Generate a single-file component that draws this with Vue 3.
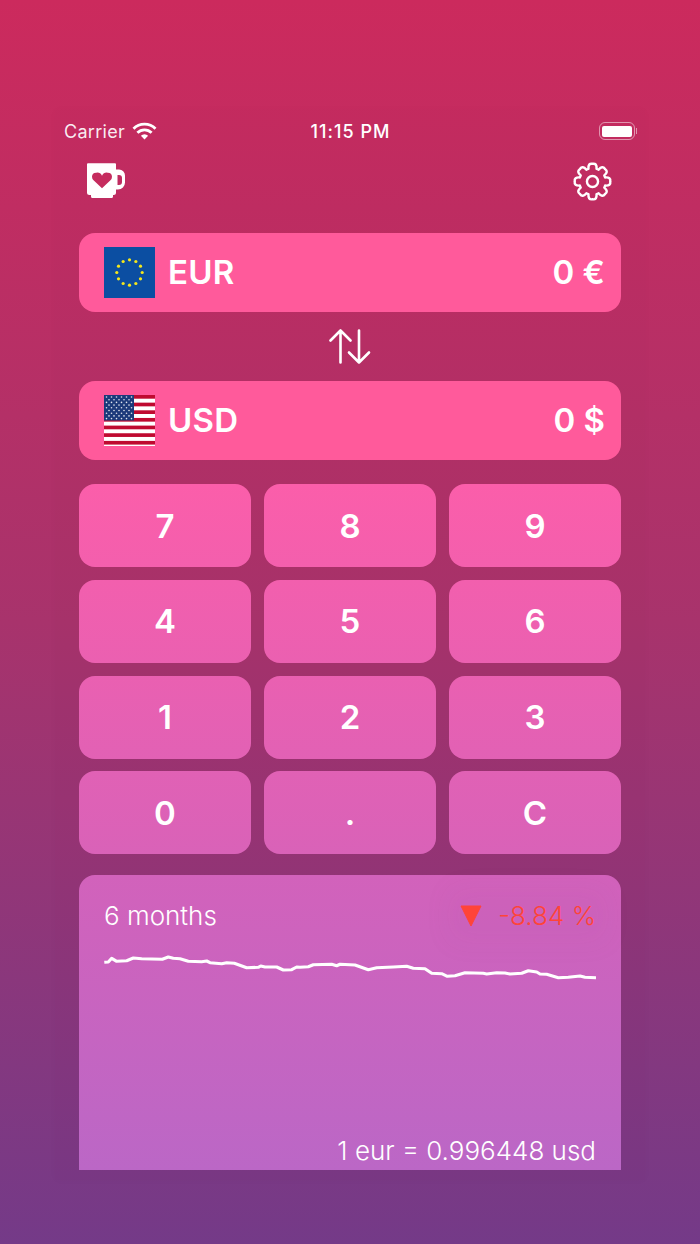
<template>
  <div class="page">
    <div class="screen">
      <div class="status">
        <div class="status-left">
          <span>Carrier</span>
          <svg width="25" height="18" viewBox="0 0 25 18" fill="none" stroke="#fff" stroke-width="2.800">
            <path d="M1.500 6.800a15.500 15.500 0 0 1 22 0" />
            <path d="M5.400 10.800a10 10 0 0 1 14.200 0" />
            <path d="M12.500 17.500l-3.600-3.700a5 5 0 0 1 7.200 0z" fill="#fff" stroke="none" />
          </svg>
        </div>
        <span class="clock">11:15 PM</span>
        <div class="battery">
          <div class="battery-body"><div class="battery-fill"></div></div>
          <div class="battery-cap"></div>
        </div>
      </div>

      <div class="toolbar">
        <svg width="40" height="38" viewBox="0 0 40 38">
          <path fill="#fff" fill-rule="evenodd" d="M2 1.200h27a1 1 0 0 1 1 1V7.500h3a6 6 0 0 1 6 6v7a7 7 0 0 1-7 7h-2v3a2.500 2.500 0 0 1-2.500 2.500H27v1.500a1.500 1.500 0 0 1-1.500 1.500H6.500A1.500 1.500 0 0 1 5 34.500V33H3.500A2.500 2.500 0 0 1 1 30.500V2.200a1 1 0 0 1 1-1zM31.500 13v10h1.500a3 3 0 0 0 3-3v-4a3 3 0 0 0-3-3z" />
          <path fill="#c52c5e" d="M16 26.300 7.800 18.600a5 5 0 0 1-1.800-3.900 4.200 4.200 0 0 1 4.300-4 5.400 5.400 0 0 1 5.700 3 5.400 5.400 0 0 1 5.700-3 4.200 4.200 0 0 1 4.300 4 5 5 0 0 1-1.800 3.900z" />
        </svg>
        <svg width="39" height="39" viewBox="-20 -20 40 40" fill="none" stroke="#fff" stroke-width="2.500" stroke-linejoin="round">
          <circle r="5.700" />
          <path :d="gearPath" />
        </svg>
      </div>

      <div class="currency">
        <svg class="flag" width="51" height="51" viewBox="0 0 51 51">
          <rect width="51" height="51" fill="#0b4ea2" />
          <circle v-for="s in euStars" :key="s.x" :cx="s.x" :cy="s.y" r="1.600" fill="#f5e71c" />
        </svg>
        <span class="code">EUR</span>
        <span class="amount">0 €</span>
      </div>

      <div class="swap">
        <svg width="42" height="36" viewBox="0 0 42 36" fill="none" stroke="#fff" stroke-width="2.600" stroke-linecap="round" stroke-linejoin="round">
          <path d="M11.500 33.500V1.500M1.500 11.500l10-10 10 10" />
          <path d="M30 1.500v32M20 23.500l10 10 10-10" />
        </svg>
      </div>

      <div class="currency">
        <svg class="flag" width="51" height="51" viewBox="0 0 51 51">
          <rect width="51" height="51" fill="#fff" />
          <rect v-for="y in usStripes" :key="y" x="0" :y="y" width="51" height="3.700" fill="#bf0a30" />
          <rect width="30" height="25.500" fill="#1c3a7a" />
          <circle v-for="s in usStars" :key="s.k" :cx="s.x" :cy="s.y" r="0.800" fill="#dfe3ee" />
        </svg>
        <span class="code">USD</span>
        <span class="amount">0 $</span>
      </div>

      <div class="keypad">
        <button v-for="k in keys" :key="k" class="key">{{ k }}</button>
      </div>

      <div class="chart">
        <div class="chart-head">
          <span>6 months</span>
          <div class="change">
            <svg width="22" height="22" viewBox="0 0 22 22">
              <path d="M1 1h20L11 21z" fill="#ff4438" stroke="#ff4438" stroke-linejoin="round" />
            </svg>
            <span>-8.84 %</span>
          </div>
        </div>
        <svg class="line" width="492" height="40" viewBox="104 950 492 40" fill="none" stroke="#fff" stroke-width="3.100" stroke-linejoin="round">
          <path :d="linePath" />
        </svg>
        <div class="rate">1 eur = 0.996448 usd</div>
      </div>
    </div>
  </div>
</template>

<script setup>
const keys = ['7', '8', '9', '4', '5', '6', '1', '2', '3', '0', '.', 'C'];

const euStars = Array.from({ length: 12 }, (_, i) => ({
  x: 25.5 + 12.7 * Math.sin((i * Math.PI) / 6),
  y: 25.5 - 12.7 * Math.cos((i * Math.PI) / 6),
}));

const usStripes = [0, 7.65, 15.3, 22.95, 30.6, 38.25, 45.9];

const usStars = [];
for (let r = 0; r < 9; r++) {
  const n = r % 2 ? 5 : 6;
  for (let c = 0; c < n; c++) {
    usStars.push({ k: r + '-' + c, x: (r % 2 ? 5 : 2.5) + c * 5, y: 2 + r * 2.700 });
  }
}

// eight rounded teeth, first one pointing up
const polar = (r, a) => (r * Math.sin(a)).toFixed(2) + ' ' + (-r * Math.cos(a)).toFixed(2);
let gear = 'M' + polar(13.6, -0.31);
for (let i = 0; i < 8; i++) {
  const a = (i * Math.PI) / 4;
  gear += 'Q' + polar(19.6, a - 0.24) + ' ' + polar(18.2, a);
  gear += 'Q' + polar(19.6, a + 0.24) + ' ' + polar(13.6, a + 0.31);
  gear += 'A13.6 13.6 0 0 1 ' + polar(13.6, a + Math.PI / 4 - 0.31);
}
const gearPath = gear + 'Z';

// traced from the six month rate
const points = [
  [104.3, 962.3], [108.3, 962], [111.7, 958.3], [116.7, 961.3], [126.7, 960.7], [133.3, 958],
  [141.7, 958.7], [162.3, 959.3], [168.3, 957], [173.3, 958.3], [180, 958.7], [188.3, 961.3],
  [201.7, 961.7], [206.7, 961], [210, 962.7], [221.7, 963.7], [226.7, 962.7], [234.3, 963.3],
  [246.7, 967.7], [258.3, 967.3], [260.7, 966], [265, 967], [276.7, 967], [283.3, 970],
  [291.7, 969.7], [296.7, 967], [300, 967.3], [308.3, 966.7], [313.3, 964.7], [331.7, 964.3],
  [336.7, 965.7], [340, 964.3], [355, 965], [368.3, 969.7], [376.7, 967.7], [393.3, 967],
  [406.7, 966.3], [413.3, 968.3], [425, 968.7], [431.7, 973.3], [441.7, 973.7], [447.3, 976.3],
  [455, 975.7], [465, 972.7], [483.3, 973.3], [486.7, 974], [496.7, 972.7], [505, 973],
  [510, 974], [521.7, 973.3], [528.3, 970.7], [536.7, 972], [540, 974], [546.7, 974.3],
  [558.3, 977.7], [568.3, 977.3], [580, 976], [585, 977.3], [596, 977.7],
];
const linePath = 'M' + points.map((p) => p.join(' ')).join('L');
</script>

<style>
html, body { margin: 0; }
</style>

<style scoped>
.page {
  height: 1244px; width: 700px; overflow: hidden; box-sizing: border-box;
  padding-top: 110px;
  background: linear-gradient(180deg, #cc2a5d 0%, #a8336c 50%, #743a88 100%);
  font-family: Inter, "Liberation Sans", sans-serif;
  color: #fff;
}
.screen {
  box-sizing: border-box; height: 1070px; margin: 0 55px; padding: 10px 24px 0;
  background: rgba(80, 20, 70, .02);
  box-shadow: 0 0 10px rgba(80, 20, 70, .02);
}

.status {
  display: grid; grid-template-columns: 1fr auto 1fr; align-items: center;
  height: 22px; margin: 0 -16px; padding-left: 1px;
  font-size: 18px;
}
.status-left { display: flex; align-items: center; gap: 7px; color: rgba(255,255,255,.92); letter-spacing: .3px; }
.clock { font-weight: 500; letter-spacing: 1px; }
.battery { display: flex; align-items: center; justify-content: flex-end; gap: 0; }
.battery-body {
  width: 36px; height: 18px; box-sizing: border-box; padding: 2.500px 2px;
  border: 1px solid rgba(255,255,255,.5); border-radius: 6px;
}
.battery-fill { height: 100%; background: #fff; border-radius: 2px; }
.battery-cap { width: 1px; height: 6px; margin-left: 1px; background: rgba(255,255,255,.5); }

.toolbar {
  display: flex; justify-content: space-between; align-items: center;
  height: 40px; margin: 19px 9px 32px 7px;
}

.currency {
  display: flex; align-items: center; box-sizing: border-box;
  height: 79px; padding: 0 16px 0 25px;
  background: #ff5a9b; border-radius: 16px;
  font-size: 33px; font-weight: 600;
}
.flag { flex: none; }
.code { margin: 0 0 2px 13px; letter-spacing: .3px; }
.amount { margin: 0 0 2px auto; }

.swap { height: 69px; display: flex; align-items: center; justify-content: center; }

.keypad {
  display: grid; grid-template-columns: repeat(3, 1fr);
  grid-auto-rows: 83px; gap: 12.800px 13px;
  margin-top: 24px;
}
.key {
  border: 0; padding: 0; border-radius: 16px;
  background: linear-gradient(180deg, #fb5eaa 484px, #d962b8 855px) fixed;
  color: #fff; font: 600 33px Inter, "Liberation Sans", sans-serif;
}

.chart {
  display: flex; flex-direction: column; box-sizing: border-box;
  height: 295px; margin-top: 20.600px; padding: 25px 25px 0;
  border-radius: 16px 16px 0 0;
  background: linear-gradient(180deg, #d262bb 0%, #bb67c6 100%);
  font-size: 26px; font-weight: 300;
}
.chart-head { display: flex; justify-content: space-between; align-items: center; height: 32px; }
.change {
  display: flex; align-items: center; gap: 16px; color: #ff4438;
  background: rgba(150, 70, 160, .05);
  box-shadow: 0 0 28px 12px rgba(150, 70, 160, .05);
}
.line { display: block; margin-top: 18px; }
.rate { margin-top: auto; padding-bottom: 4px; text-align: right; }
</style>
